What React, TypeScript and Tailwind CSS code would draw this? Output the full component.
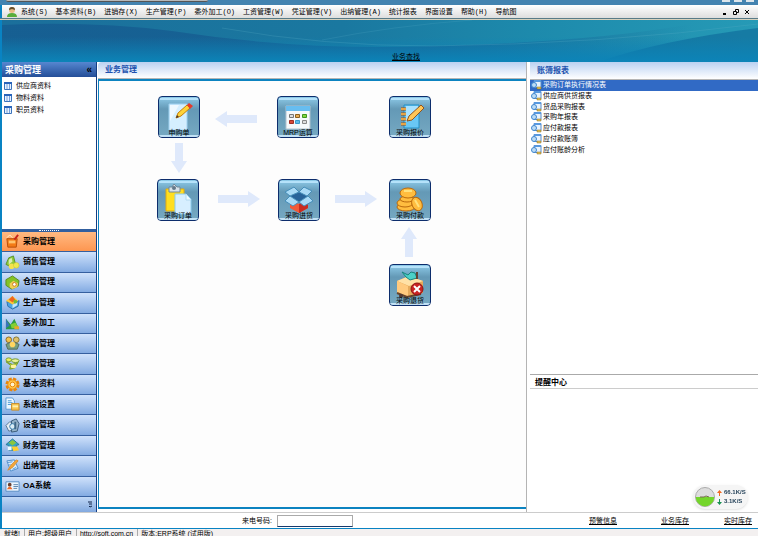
import React from "react";

const menus = ["系统(S)", "基本资料(B)", "进销存(X)", "生产管理(P)", "委外加工(O)", "工资管理(W)", "凭证管理(V)", "出纳管理(A)", "统计报表", "界面设置", "帮助(H)", "导航图"];
const masters = ["供应商资料", "物料资料", "职员资料"];
const reports = ["采购订单执行情况表", "供应商供货报表", "货品采购报表", "采购年报表", "应付款报表", "应付款账簿", "应付账龄分析"];

const modules: { name: string; icon: React.ReactNode }[] = [
  { name: "采购管理", icon: <><path d="M2 5h11l-1 9H3z" fill="#f47a16" stroke="#b84c08" /><path d="M4 7h7v3H4z" fill="#ffc36d" /><path d="M2 4l3-3 3 3" fill="none" stroke="#fff3d0" /><path d="M10 6l4-5" stroke="#c8231b" strokeWidth="2" /></> },
  { name: "销售管理", icon: <><path d="M1 10l3-7 5-2 2 8-4 4z" fill="#8fc93a" stroke="#57912a" /><path d="M4 5l3-2 1 4-4 3z" fill="#d8eeb5" /><circle cx="7" cy="12" r="3" fill="#f5e34d" /><circle cx="12" cy="11" r="3" fill="#ece94e" stroke="#c9b92b" strokeWidth=".5" /></> },
  { name: "仓库管理", icon: <><path d="M1 5l7-4 7 5-1 6-7 3-6-4z" fill="#84c325" stroke="#5a8c1e" /><path d="M5 9l4-3 5 3-1 4-5 2-3-2z" fill="#f2ce52" /><circle cx="10" cy="10" r="2" fill="#fff" stroke="#c5791b" /></> },
  { name: "生产管理", icon: <><path d="M2 7l6 2 7-3-1 6-6 3-5-3z" fill="#4ba5e4" stroke="#2d6faa" /><path d="M8 10l5-2v3l-5 3z" fill="#c5e7fb" /><path d="M1 6l7-5 6 5-6 4z" fill="#ffca38" /><path d="M4 5l4-4 3 4-3 3z" fill="#ed651f" /><circle cx="11" cy="7" r="2" fill="#78bb32" /></> },
  { name: "委外加工", icon: <><path d="M1 14V3l5 6 4-6 5 11z" fill="#2b9b43" /><path d="M1 3l4 7-4 3z" fill="#3974b9" /><path d="M6 9l5-2 4 6H7z" fill="#84cf32" /><path d="M10 11h5v3h-5z" fill="#eaa62b" /></> },
  { name: "人事管理", icon: <><circle cx="4" cy="4" r="3" fill="#f2c34b" stroke="#85682a" /><circle cx="12" cy="4" r="3" fill="#dec16a" stroke="#857332" /><path d="M1 9l4-2 3 2 3-2 4 2-2 5H3z" fill="#779f80" stroke="#536c57" /><circle cx="8" cy="9" r="3" fill="#ffd660" /></> },
  { name: "工资管理", icon: <><ellipse cx="4" cy="4" rx="3" ry="2" fill="#ecf05b" stroke="#799b34" /><ellipse cx="11" cy="5" rx="4" ry="2" fill="#eaf29a" stroke="#72982e" /><path d="M1 6l7 3 6-2-4 6-5 1 1-4z" fill="#b1cd31" stroke="#789c23" /><ellipse cx="9" cy="11" rx="3" ry="2" fill="#fff29b" /></> },
  { name: "基本资料", icon: <><circle cx="8" cy="8" r="5.5" fill="none" stroke="#e9860b" strokeWidth="4" strokeDasharray="3 1.3" /><circle cx="8" cy="8" r="5" fill="#ffc74b" stroke="#ed8a0b" /><circle cx="8" cy="8" r="2.5" fill="#fff2cd" stroke="#e9860b" /></> },
  { name: "系统设置", icon: <><path d="M1 1h7l2 3v9H1z" fill="#eef8ff" stroke="#5999d2" /><path d="M3 4h4M3 6h5M3 8h4" stroke="#4b9ad8" /><path d="M7 7h8v7H7z" fill="#f8c54e" stroke="#c38b2c" /><path d="M8 10h6" stroke="#fff2b0" strokeWidth="2" /></> },
  { name: "设备管理", icon: <><path d="M1 8l4-4 3 1v8l-4 1z" fill="#e8eef4" stroke="#507393" /><path d="M7 3l5-2 3 5-2 8-6 1z" fill="#96b4ca" stroke="#385977" /><circle cx="8" cy="9" r="3" fill="#d9edf6" stroke="#3178a9" /><path d="M11 4v8" stroke="#416786" strokeWidth="2" /></> },
  { name: "财务管理", icon: <><path d="M1 7l7-6 7 6-3 1v5H4V8z" fill="#35a3c4" stroke="#287798" /><path d="M4 5l4-3 4 3-4 3z" fill="#8ac73f" /><path d="M7 9h6l2 4-6 1z" fill="#ffcc31" /><path d="M3 9h4v4H3z" fill="#eefaff" /></> },
  { name: "出纳管理", icon: <><path d="M2 3l8-1 4 9-8 3z" fill="#d8edff" stroke="#508dcb" /><path d="M12 2L6 8l-3 5 5-3 6-7z" fill="#f3a83a" stroke="#d98f34" /><path d="M2 5l6-1M3 8l3-1M8 12l4-2" stroke="#5795cf" /></> },
  { name: "OA系统", icon: <><path d="M1 3h14v10H1z" fill="#edf7ff" stroke="#568cc3" /><circle cx="5" cy="6" r="2" fill="#6a4030" /><path d="M2 11q3-6 6 0z" fill="#ed6b2a" /><path d="M9 6h5M9 8h5M9 10h4" stroke="#5c83ac" /></> },
];

const nodes: { name: string; place: string; art: React.ReactNode }[] = [
  { name: "申购单", place: "left-[59px] top-[15px]", art: <><path d="M11 8h18v26H11z" fill="#d5efff" stroke="#a0d2f1" /><path d="M12 9l9 0-9 16z" fill="#eef9ff" /><path d="M18 22l2-5 9-8 3 3-9 8z" fill="#ffd338" stroke="#c77e08" /><path d="M29 9l2-2 4 3-3 3z" fill="#e43a2c" /><path d="M18 22l1-3 2 2z" fill="#49372b" /></> },
  { name: "MRP运算", place: "left-[178px] top-[15px]", art: <><path d="M9 10h24v23H9z" fill="#f6f9fb" stroke="#b0c1ce" /><path d="M9 10h24v5H9z" fill="#67bdf0" /><path d="M12.5 18.5h4v3h-4z" fill="#ddd" stroke="#777" /><path d="M18.5 18.5h4v3h-4z" fill="#e7ae54" stroke="#8c6020" /><path d="M25.500 18.5h4v3h-4z" fill="#87d540" stroke="#3c9620" /><path d="M12.5 24.500h4v3h-4z" fill="#d44738" stroke="#a12c24" /><path d="M18.5 24.500h4v3h-4z" fill="#62bce9" stroke="#3a9acb" /><path d="M25.500 24.500h4v3h-4z" fill="#ddd" stroke="#888" /></> },
  { name: "采购报价", place: "left-[290px] top-[15px]", art: <><path d="M15 9h15v23H15z" fill="#69c7f5" stroke="#238fc6" /><path d="M17 10h12v5L17 26z" fill="#a9e2ff" /><path d="M12 13h5M12 18h5M12 23h5M12 28h5" stroke="#9c5417" strokeWidth="3" /><path d="M12 13h5M12 18h5M12 23h5M12 28h5" stroke="#ffbf55" strokeWidth="1.5" /><path d="M18 25l2-5 12-11 3 3-12 12z" fill="#ffc657" stroke="#92531b" /></> },
  { name: "采购订单", place: "left-[58px] top-[98px]", art: <><path d="M9 10h18v22H9z" fill="#ffde20" stroke="#e4ab0c" /><path d="M12 8h3l2-3 3 3h3v5H12z" fill="#d7e2e9" stroke="#71899a" /><circle cx="17" cy="9" r="2" fill="#637889" /><path d="M18 15h11l5 5v15H18z" fill="#d7efff" stroke="#8bcbed" /><path d="M29 15v6h5" fill="#eefaff" stroke="#b3daf0" /></> },
  { name: "采购进货", place: "left-[179px] top-[98px]", art: <><path d="M12 20l9 5 9-5v9l-9 5-9-5z" fill="#f25a38" /><path d="M21 25l9-5v9l-9 5z" fill="#c92c20" /><path d="M12 17l9-5 9 5-9 6z" fill="#286399" /><path d="M12 17L7 13l9-5 5 5zM21 13l5-5 8 4-5 5zM12 17l9 6-6 4-8-5zM30 17l5 5-9 5-5-4z" fill="#a9daf6" stroke="#468eb9" /></> },
  { name: "采购付款", place: "left-[290px] top-[98px]", art: <g fill="#ffbd3f" stroke="#ba690c"><ellipse cx="17" cy="28" rx="9" ry="4" /><ellipse cx="16" cy="24" rx="8" ry="4" /><ellipse cx="18" cy="20" rx="7" ry="3" /><ellipse cx="19" cy="14" rx="8" ry="5" /><ellipse cx="28" cy="25" rx="5" ry="7" transform="rotate(-25 28 25)" /><path d="M15 12h8M26 21l4 7" stroke="#ffe17d" strokeWidth="2" /></g> },
  { name: "采购退货", place: "left-[290px] top-[183px]", art: <><path d="M8 17l12-5 14 5v12l-15 4-10-4z" fill="#e5aa5c" /><path d="M8 17l12-5 14 5-14 5z" fill="#ffe1a6" /><path d="M8 17l11 5v11l-11-4z" fill="#ffca7e" /><path d="M8 29l10 4 14-3" fill="none" stroke="#67442c" strokeWidth="2" /><path d="M13 8l6 3 3-3 4 1 2 5-7 2-4-3z" fill="#4bd1c7" stroke="#19837d" /><path d="M28 8v7" stroke="#614534" strokeWidth="2" /><circle cx="12" cy="32" r="2" fill="#4e3934" /><circle cx="28" cy="25" r="6" fill="#c92323" stroke="#8b1515" /><path d="M25 22l6 6m0-6l-6 6" stroke="white" strokeWidth="2" /></> },
];

function Arrow({ place, turn, length = 42 }: { place: string; turn: number; length?: number }) {
  const start = 22 - length / 2;
  const end = 22 + length / 2;
  return (
    <svg viewBox="0 0 44 44" className={`absolute size-11 ${place}`} aria-hidden="true">
      <path d={`M${start} 18H${end - 12}V14L${end} 22L${end - 12} 30V26H${start}z`} fill="#dfe9fb" transform={`rotate(${turn} 22 22)`} />
    </svg>
  );
}

function ReportIcon() {
  return (
    <svg viewBox="0 0 11 10" className="h-[10px] w-[11px] shrink-0" aria-hidden="true">
      <path d="M3 .5h7v7H3z" fill="#e7f3ff" stroke="#5a8bc5" />
      <path d="M3 0h7v2H3z" fill="#5798df" />
      <circle cx="3" cy="5" r="2.5" fill="#bcdcf5" stroke="#3f86cf" />
      <path d="M6 7h4v2H6z" fill="#e7c452" stroke="#826b26" strokeWidth=".5" />
    </svg>
  );
}

export default function App() {
  return (
    <div className="flex h-screen flex-col overflow-hidden bg-[#0983c3] font-['Liberation_Sans','Noto_Sans_CJK_SC',sans-serif] text-[7px] leading-[10px] text-black">
      <div className="flex h-[5px] shrink-0 justify-between bg-[#4383b0] pl-[6px] pr-1">
        <div className="h-[2px] w-[202px] rounded-b border-b border-[#555] bg-[#b7b9ba]" />
        <div className="flex gap-1">
          <i className="h-[2px] w-2 bg-[#dce5eb]" /><i className="h-[2px] w-2 bg-[#dce5eb]" /><i className="h-[2px] w-2 bg-[#dce5eb]" />
        </div>
      </div>
      <header className="ml-[2px] flex h-[13px] shrink-0 items-center bg-linear-to-b from-white to-[#dedede] pr-2">
        <svg viewBox="0 0 10 10" className="ml-[5px] mr-[4px] size-[10px]" aria-hidden="true"><path d="M0 10q0-4 5-4t5 4z" fill="#58ad3b" /><circle cx="5" cy="3" r="3" fill="#e7b982" /><path d="M2 3q0-3 3-3t3 3L5 2z" fill="#654d2b" /></svg>
        <nav className="flex flex-1 gap-[8px] whitespace-nowrap font-['Liberation_Mono','Noto_Sans_CJK_SC',monospace]">
          {menus.map((name) => <button key={name}>{name}</button>)}
        </nav>
        <div className="flex gap-[5px]">
          <button aria-label="最小化"><svg viewBox="0 0 6 6" className="size-[6px]"><path d="M1 5h3" stroke="black" strokeWidth="2" /></svg></button>
          <button aria-label="还原"><svg viewBox="0 0 6 6" className="size-[6px]"><path d="M2.5 2V.5h3v3H4M.5 2.5h3v3h-3z" fill="none" stroke="black" /></svg></button>
          <button aria-label="关闭"><svg viewBox="0 0 6 6" className="size-[6px]"><path d="M1 1l4 4m0-4L1 5" stroke="black" /></svg></button>
        </div>
      </header>
      <div className="h-[2px] shrink-0 border-t border-[#587b88] bg-[#d8d2bd]" />
      <section className="relative ml-[2px] h-[42px] shrink-0">
        <svg viewBox="0 0 756 42" preserveAspectRatio="none" className="absolute inset-0 size-full" aria-hidden="true">
          <defs>
            <linearGradient id="sea" x2="1" y2="0"><stop stopColor="#1b6f9b" /><stop offset=".45" stopColor="#1a78a0" /><stop offset=".7" stopColor="#1d8aac" /><stop offset="1" stopColor="#269ab6" /></linearGradient>
            <linearGradient id="floor" x2="0" y2="1"><stop offset=".4" stopColor="#0c84b8" stopOpacity="0" /><stop offset="1" stopColor="#0c84b8" /></linearGradient>
            <linearGradient id="swell" x2="1" y2="0"><stop stopColor="#155b90" stopOpacity=".8" /><stop offset=".6" stopColor="#155b90" stopOpacity=".7" /><stop offset="1" stopColor="#155b90" stopOpacity="0" /></linearGradient>
          </defs>
          <path d="M0 0h756v42H0z" fill="url(#sea)" />
          <path d="M0 5q90-4 170 6 130 20 260 15 160-4 260-22v38H0z" fill="url(#swell)" />
          <path d="M596 42Q660 20 756 8v34z" fill="#106e9c" opacity=".7" />
          <path d="M0 0h756v42H0z" fill="url(#floor)" />
          <path d="M220 8q100 18 210 18 170-2 326-22" fill="none" stroke="#5cb0c7" opacity=".25" />
          <path d="M320 20q70-14 150-20" fill="none" stroke="#5cb0c7" opacity=".2" />
        </svg>
        <a href="#search" className="absolute bottom-0 left-[390px] underline">业务查找</a>
      </section>

      <main className="ml-[2px] flex min-h-0 flex-1 bg-white">
        <aside className="flex w-[95px] shrink-0 flex-col border-r border-[#143e83]">
          <h2 className="flex h-[15px] shrink-0 items-center justify-between bg-linear-to-b from-[#5687d0] to-[#244e98] pl-[3px] pr-1 text-[9px] font-bold text-white">
            采购管理 <button aria-label="折叠" className="text-[10px] text-black">«</button>
          </h2>
          <ul className="flex-1 pt-[3px]">
            {masters.map((name) => (
              <li key={name} className="flex h-[12px] items-center gap-[4px] pl-[2px]">
                <svg viewBox="0 0 8 8" className="size-2" aria-hidden="true"><path d="M.5.5h7v7h-7z" fill="#e8f2ff" stroke="#3c74bc" /><path d="M0 0h8v2H0z" fill="#2964ba" /><path d="M3 2v5M5.500 2v5" stroke="#78a2db" /></svg>
                <a href="#master">{name}</a>
              </li>
            ))}
          </ul>
          <div className="flex h-[3px] shrink-0 items-center justify-center bg-[#315f9f]"><i className="w-5 border-t border-dotted border-white" /></div>
          <nav className="grid h-[265px] shrink-0 auto-rows-fr">
            {modules.map(({ name, icon }, i) => (
              <button key={name} className={`flex items-center gap-[3px] border-b border-[#355f9f] pl-[3px] text-[8px] font-bold ${i === 0 ? "bg-linear-to-b from-[#ffb981] to-[#fd9650]" : "bg-linear-to-b from-[#d0e2fb] to-[#83abe2]"}`}>
                <svg viewBox="0 0 16 16" className="size-[15px] shrink-0" aria-hidden="true">{icon}</svg>
                {name}
              </button>
            ))}
          </nav>
          <div className="flex h-[15px] shrink-0 items-center justify-end bg-linear-to-b from-[#c1d8f6] to-[#82a9df] pr-[3px]">
            <button aria-label="更多"><svg viewBox="0 0 5 7" className="h-[7px] w-[5px]"><path d="M0 1h4M1 3h3M1 5l1 1 2-1" fill="none" stroke="#10244a" /></svg></button>
          </div>
        </aside>

        <section className="flex min-w-0 flex-1 flex-col border-r border-[#b4b4b4] pl-px">
          <h2 className="h-[17px] shrink-0 rounded-tl border-b border-[#b5b5b5] bg-linear-to-b from-[#bad1f1] to-white pl-[7px] text-[8px] font-bold leading-[16px] text-[#2051ae]">业务管理</h2>
          <div className="relative mb-[3px] flex-1 border-y-2 border-l border-[#0c83c0] bg-[#fdfdfd]">
            {nodes.map(({ name, place, art }) => (
              <button key={name} className={`absolute size-[42px] overflow-hidden rounded border border-[#0d2d6c] bg-linear-to-b from-[#8ecbe9] via-[#6499b6] via-30% to-[#76a9c2] ${place}`}>
                <svg viewBox="1 1 40 40" className="absolute inset-0 size-full" aria-hidden="true"><path d="M2 3h38" stroke="#b5e2fa" strokeWidth="2" /><path d="M1 40h40" stroke="#c1e1f5" strokeWidth="2" />{art}</svg>
                <span className="absolute inset-x-0 bottom-0 whitespace-nowrap text-center leading-[8px]">{name}</span>
              </button>
            ))}
            <Arrow place="left-[115px] top-[16px]" turn={180} />
            <Arrow place="left-[58px] top-[55px]" turn={90} length={30} />
            <Arrow place="left-[118px] top-[96px]" turn={0} />
            <Arrow place="left-[235px] top-[96px]" turn={0} />
            <Arrow place="left-[288px] top-[139px]" turn={270} length={30} />
          </div>
        </section>

        <aside className="flex w-[231px] shrink-0 flex-col pl-[3px]">
          <h2 className="h-[18px] shrink-0 border-b border-[#b5b5b5] bg-linear-to-b from-[#bad1f1] to-white pl-[7px] text-[8px] font-bold leading-[17px] text-[#2051ae]">账簿报表</h2>
          <ul className="grid h-[75px] shrink-0 auto-rows-fr">
            {reports.map((name, i) => (
              <li key={name} className={`flex items-center gap-px pl-px ${i === 0 ? "bg-[#316ac5] text-white" : ""}`}><ReportIcon /><a href="#report">{name}</a></li>
            ))}
          </ul>
          <div className="flex-1" />
          <section className="h-[138px] shrink-0 border-t border-[#aaa]">
            <h2 className="h-[14px] border-b border-[#ccc] pl-[5px] text-[8px] font-bold leading-[15px]">提醒中心</h2>
          </section>
        </aside>
      </main>

      <footer className="ml-[2px] flex h-[16px] shrink-0 items-center border-t border-[#ccc] bg-white pl-[240px] pr-[6px]">
        <label htmlFor="phone" className="w-[35px] whitespace-nowrap">来电号码:</label>
        <input id="phone" className="h-[12px] w-[76px] border border-[#aaa] border-b-[#17396d] bg-white outline-none" />
        <div className="flex flex-1 justify-end underline">
          <a href="#alert" className="mr-[44px]">预警信息</a>
          <a href="#stock" className="mr-[35px]">业务库存</a>
          <a href="#live">实时库存</a>
        </div>
      </footer>
      <div className="mt-px flex h-[7px] shrink-0 gap-[4px] overflow-hidden bg-[#f3f0f0] pl-[4px] leading-[10px]">
        <span>就绪!</span><span className="border-l border-[#aaa] pl-[3px]">用户:超级用户</span><span className="border-l border-[#aaa] pl-[3px]">http://soft.com.cn</span><span className="border-l border-[#aaa] pl-[3px]">版本:ERP系统 (试用版)</span>
      </div>
      <div className="fixed bottom-[27px] right-[10px] flex h-[24px] w-[55px] items-center gap-[2px] rounded-full bg-[#f5f5f5] pl-[2px] text-[6px] font-bold leading-[9px] shadow">
        <svg viewBox="0 0 20 20" className="size-[20px] shrink-0" aria-hidden="true"><circle cx="10" cy="10" r="9.5" fill="#ddd" stroke="#aaa" /><path d="M.7 10h18.6a9.3 9.3 0 0 1-18.6 0" fill="#74d52b" /><path d="M5 10h4l2-1 3 1" fill="none" stroke="#756c4c" /></svg>
        <div className="whitespace-nowrap text-[#27445b]">
          <p className="flex items-center gap-[2px]"><svg viewBox="0 0 5 6" className="h-[6px] w-[5px]" aria-hidden="true"><path d="M0 3l2.500-3L5 3H3v3H2V3z" fill="#f26922" /></svg>66.1K/S</p>
          <p className="flex items-center gap-[2px]"><svg viewBox="0 0 5 6" className="h-[6px] w-[5px]" aria-hidden="true"><path d="M0 3l2.500 3L5 3H3V0H2v3z" fill="#189052" /></svg>3.1K/S</p>
        </div>
      </div>
    </div>
  );
}
